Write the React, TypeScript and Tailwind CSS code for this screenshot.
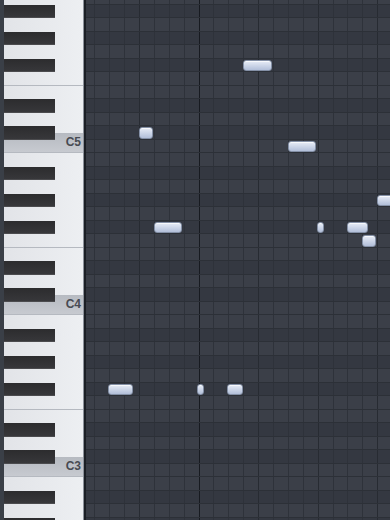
import React from "react";

// rows start one above the top edge (B5 at y = -9), 13.5px each
const ROWS = Array.from({ length: 40 }, (_, i) => i - 1);
const pitchClass = (r: number) => (((10 - r) % 12) + 12) % 12;
const isBlack = (r: number) => [1, 3, 6, 8, 10].includes(pitchClass(r));

const WHITE_KEYS = [
  { name: "B", h: "h-[20.25px]", edge: "border-transparent" },
  { name: "A", h: "h-[27px]", edge: "border-transparent" },
  { name: "G", h: "h-[27px]", edge: "border-transparent" },
  { name: "F", h: "h-[20.25px]", edge: "border-[#b5b9c0]" },
  { name: "E", h: "h-[20.25px]", edge: "border-transparent" },
  { name: "D", h: "h-[27px]", edge: "border-transparent" },
  { name: "C", h: "h-[20.25px]", edge: "border-[#b5b9c0]" },
];

const OCTAVES = [5, 4, 3];
// what is left below C3 down to the bottom edge
const TAIL = WHITE_KEYS.slice(0, 3);

const GRID_LEFT = 86;

// x / width in page pixels
const NOTES = [
  { row: 4, x: 243.3, w: 28.4 },
  { row: 9, x: 138.5, w: 14.2 },
  { row: 10, x: 288.3, w: 27.9 },
  { row: 14, x: 376.8, w: 24 },
  { row: 16, x: 153.6, w: 28.8 },
  { row: 16, x: 317.3, w: 6.8 },
  { row: 16, x: 347.4, w: 21 },
  { row: 17, x: 362.2, w: 14.2 },
  { row: 28, x: 108.3, w: 25.2 },
  { row: 28, x: 197.4, w: 7 },
  { row: 28, x: 227.4, w: 15.3 },
];

const CELLS = Array.from({ length: 21 }, (_, k) => k);

function lineClass(k: number) {
  if (k === 7) return "border-[#171a20]";
  if ((k - 3) % 4 === 0) return "border-[#272b32]";
  return "border-[#2e323a]";
}

function WhiteKey({ k, id }: { k: (typeof WHITE_KEYS)[number]; id: string }) {
  return (
    <div
      key={id}
      className={`${k.h} shrink-0 border-b ${k.edge} bg-linear-to-r from-[#e2e4e8] to-[#edeff2]`}
    />
  );
}

function Keys() {
  return (
    <div className="grid w-[79px] shrink-0 -mt-[9px]">
      {/* white keys */}
      <div className="[grid-area:1/1] flex flex-col">
        {OCTAVES.map((oct) =>
          WHITE_KEYS.map((k) =>
            k.name === "C" ? (
              <div
                key={`${k.name}${oct}`}
                className={`${k.h} shrink-0 border-b ${k.edge} bg-linear-to-b from-[#b6bac1] to-[#c7cad0] flex items-center justify-end pr-[2px] text-[12px] leading-none font-bold text-[#474b53]`}
              >
                C{oct}
              </div>
            ) : (
              <WhiteKey key={`${k.name}${oct}`} k={k} id={`${k.name}${oct}`} />
            )
          )
        )}
        {TAIL.map((k) => (
          <WhiteKey key={`${k.name}2`} k={k} id={`${k.name}2`} />
        ))}
      </div>
      {/* black keys */}
      <div className="[grid-area:1/1] flex flex-col">
        {ROWS.map((r) => (
          <div key={r} className="h-[13.5px] shrink-0 flex">
            {isBlack(r) && (
              <div className="w-[51px] h-full bg-linear-to-b from-[#2c2c2e] to-[#37373a] border-b border-[#4b4b4e]" />
            )}
          </div>
        ))}
      </div>
    </div>
  );
}

function Grid() {
  return (
    <div className="flex-1 flex flex-col -mt-[9px] min-w-0">
      {ROWS.map((r) => (
        <div
          key={r}
          className={`relative h-[13.5px] shrink-0 flex border-b border-[#2c3037] ${
            isBlack(r) ? "bg-[#343841]" : "bg-[#3b3f48]"
          }`}
        >
          <div className="w-[8.3px] shrink-0" />
          {CELLS.map((k) => (
            <div key={k} className={`w-[14.9px] shrink-0 border-l ${lineClass(k)}`} />
          ))}
          {NOTES.filter((n) => n.row === r).map((n, i) => (
            <div
              key={i}
              className="absolute top-[1px] h-[11.5px] rounded-[3px] border border-[#8490a6] bg-linear-to-b from-[#e8edf7] to-[#b2bfd9] shadow-[inset_0_1px_0_rgba(255,255,255,0.7)]"
              style={{ left: n.x - GRID_LEFT, width: n.w }}
            />
          ))}
        </div>
      ))}
    </div>
  );
}

export default function App() {
  return (
    <div className="w-[390px] h-[520px] overflow-hidden flex bg-[#3b3f48] font-['Liberation_Sans',Arial,sans-serif]">
      <div className="w-[4px] shrink-0 bg-[#3a3f47]" />
      <Keys />
      <div className="w-[1px] shrink-0 bg-[#8c919a]" />
      <div className="w-[2px] shrink-0 bg-[#1b1f25]" />
      <Grid />
    </div>
  );
}
